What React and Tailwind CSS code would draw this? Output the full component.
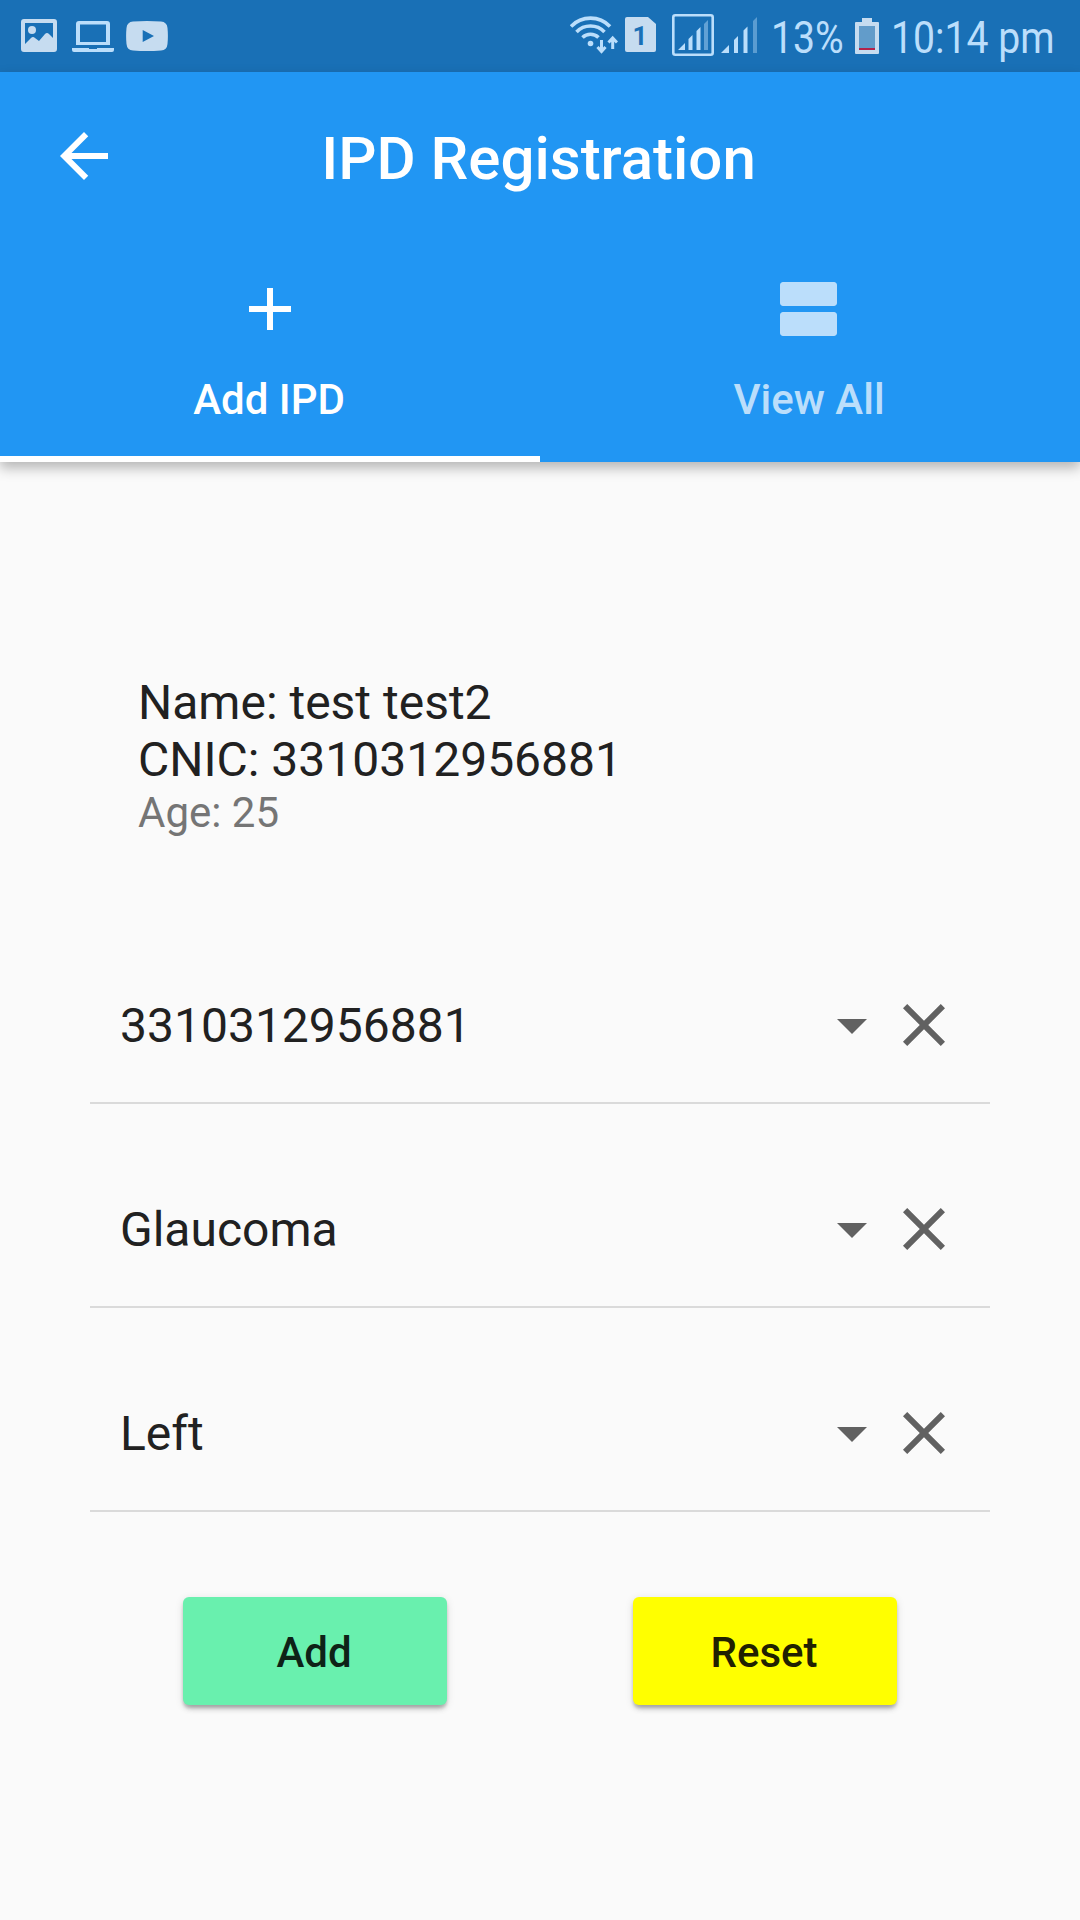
import { useState } from "react";
import clsx from "clsx";

const PATHS = {
  back: "M20 11H7.83l5.59-5.59L12 4l-8 8 8 8 1.41-1.41L7.83 13H20v-2z",
  add: "M19 13h-6v6h-2v-6H5v-2h6V5h2v6h6v2z",
  agenda:
    "M20 13H3c-.55 0-1 .45-1 1v6c0 .55.45 1 1 1h17c.55 0 1-.45 1-1v-6c0-.55-.45-1-1-1zm0-10H3c-.55 0-1 .45-1 1v6c0 .55.45 1 1 1h17c.55 0 1-.45 1-1V4c0-.55-.45-1-1-1z",
  dropDown: "M7 10l5 5 5-5z",
  close:
    "M19 6.41L17.59 5 12 10.59 6.41 5 5 6.41 10.59 12 5 17.59 6.41 19 12 13.41 17.59 19 19 17.59 13.41 12z",
};

const Icon = ({ name, className = "" }) => (
  <svg viewBox="0 0 24 24" className={clsx("size-18 shrink-0 fill-current", className)}>
    <path d={PATHS[name]} />
  </svg>
);

const StatusBar = () => (
  <div className="flex h-18 items-start bg-[#1970b6] pl-[21px] text-[#bbdefb]">
    {/* NOTIFICATIONS */}
    <svg viewBox="0 0 36 72" className="h-18 w-9 fill-[#c6dcf0]">
      <path
        fillRule="evenodd"
        d="M3 19h30a3 3 0 0 1 3 3v27a3 3 0 0 1-3 3H3a3 3 0 0 1-3-3V22a3 3 0 0 1 3-3zM4 23v21l6-6q2-2 4 0l4 3 6-7q2-2 4 0l4 4V23z"
      />
      <circle cx="11" cy="30" r="4" />
    </svg>
    <svg viewBox="0 0 42 72" className="ml-[15px] h-18 w-[42px] fill-current">
      <path
        fillRule="evenodd"
        d="M7 21h28a3 3 0 0 1 3 3v21H4V24a3 3 0 0 1 3-3zM8 24.500v17.500h26V24.500z"
      />
      <path d="M0 48h17v1h8v-1h17v2a2 2 0 0 1-2 2H2a2 2 0 0 1-2-2z" />
    </svg>
    <svg viewBox="0 0 42 72" className="ml-3 h-18 w-[42px] fill-[#c6dcf0]">
      <path
        fillRule="evenodd"
        d="M7 21.500Q21 20.500 35 21.500q6 .5 6.500 6.500.8 8 0 16-.5 6-6.500 6.500-14 1-28 0-6-.5-6.500-6.500-.8-8 0-16Q1 22 7 21.500zM16.700 30v12L28 36z"
      />
    </svg>

    {/* CONNECTIVITY */}
    <svg viewBox="0 0 48 72" className="ml-[402px] h-18 w-12 fill-none stroke-current">
      <path strokeWidth="3.600" d="M1 26.500a27 27 0 0 1 39 0M6.500 32a19.500 19.500 0 0 1 28 0M12.500 37.500a11.500 11.500 0 0 1 16 0" />
      <circle cx="20.500" cy="43.500" r="2.800" className="fill-current stroke-none" />
      <path strokeWidth="3" d="M31.500 40v11M27.500 47l4 4.500 4-4.500M42.700 49V38M38.500 42.500l4.200-4.500 4.300 4.500" />
    </svg>
    <div className="ml-[7px] mt-[17px] h-[35px] w-[31px]">
      <svg viewBox="0 0 31 35" className="fill-[#c6dcf0]">
        <path d="M2 0h21l8 7v26a2 2 0 0 1-2 2H2a2 2 0 0 1-2-2V2a2 2 0 0 1 2-2z" />
        <text x="15" y="28" textAnchor="middle" className="fill-[#1970b6] font-['Roboto'] text-[26px] font-bold">
          1
        </text>
      </svg>
    </div>
    <svg viewBox="0 0 42 72" className="ml-4 h-18 w-[42px] fill-current">
      <rect x="1.300" y="15.300" width="39.400" height="39.400" rx="2" className="fill-none stroke-current" strokeWidth="2.600" />
      <path d="M6 50l7-7v7zM16.500 39l4-4v15h-4zM24.500 31l4-4v23h-4z" />
      <path opacity=".45" d="M32 24l4-4v30h-4z" />
    </svg>
    <svg viewBox="0 0 36 72" className="ml-[7px] h-18 w-9 fill-current">
      <path d="M0 53l8-8v8zM13 40l4-4v17h-4zM22.500 30.500l4-4V53h-4z" />
      <path opacity=".4" d="M32 21l4-4v36h-4z" />
    </svg>

    <span className="ml-[14px] mt-0.5 w-[70px] origin-left scale-x-[0.87] whitespace-nowrap text-[45px] leading-[72px]">
      13%
    </span>
    <svg viewBox="0 0 24 72" className="ml-[14px] h-18 w-6">
      <path className="fill-[#c6dcf0]" d="M7 18h10v4h6a1 1 0 0 1 1 1v30a1 1 0 0 1-1 1H1a1 1 0 0 1-1-1V23a1 1 0 0 1 1-1h6z" />
      <path className="fill-[#629cca]" d="M4 26h16v22H4z" />
      <path className="fill-[#b3224a]" d="M4 48h16v2H4z" />
    </svg>
    <span className="ml-3 mt-0.5 origin-left scale-x-[0.87] whitespace-nowrap text-[45px] leading-[72px]">
      10:14 pm
    </span>
  </div>
);

const Tab = ({ icon, label, active, onClick }) => (
  <button
    onClick={onClick}
    className={clsx(
      "flex h-[222px] flex-1 flex-col items-center border-b-6 pt-[33px] text-[42px] font-medium",
      active ? "border-white text-white" : "border-transparent text-[#bbdefb]"
    )}
  >
    <Icon name={icon} />
    <span className="mt-[31px] pr-0.5 leading-[48px]">{label}</span>
  </button>
);

const SelectField = ({ value, onClear }) => (
  <div className="mb-[60px] flex h-36 items-center border-b-2 border-[#dadada] px-[30px] pb-3 text-[#616161]">
    <span className="flex-1 pt-0.5 text-5xl leading-[56px] text-[#212121]">{value}</span>
    <Icon name="dropDown" />
    <button onClick={onClear}>
      <Icon name="close" />
    </button>
  </div>
);

const ActionButton = ({ label, className = "", onClick }) => (
  <button
    onClick={onClick}
    className={clsx(
      "h-[108px] w-[264px] rounded-md pt-0.5 pr-0.5 text-[42px] font-medium",
      "shadow-[0_3px_3px_rgba(0,0,0,0.14),0_6px_6px_-3px_rgba(0,0,0,0.2),0_2px_8px_rgba(0,0,0,0.12)]",
      className
    )}
  >
    {label}
  </button>
);

const initialFields = ["3310312956881", "Glaucoma", "Left"];

const App = () => {
  const [tab, setTab] = useState("add");
  const [fields, setFields] = useState(initialFields);

  const clearField = (index) =>
    setFields(fields.map((field, i) => (i === index ? "" : field)));

  return (
    <div className="flex h-[1920px] w-[1080px] flex-col overflow-hidden bg-[#fafafa] font-['Roboto',sans-serif]">
      <StatusBar />

      <header className="bg-[#2196f3] shadow-[0_6px_12px_rgba(0,0,0,0.28)]">
        <div className="flex h-42 items-center px-12 text-white">
          <button>
            <Icon name="back" />
          </button>
          <h1 className="flex-1 pt-1.5 pr-[75px] text-center text-6xl leading-[70px] font-medium">
            IPD Registration
          </h1>
        </div>
        <div className="flex">
          <Tab icon="add" label="Add IPD" active={tab === "add"} onClick={() => setTab("add")} />
          <Tab icon="agenda" label="View All" active={tab === "all"} onClick={() => setTab("all")} />
        </div>
      </header>

      <main className="px-[90px] pt-[212px]">
        {/* PATIENT */}
        <div className="pl-12 text-5xl leading-[57px] text-[#212121]">
          <p>Name: test test2</p>
          <p>CNIC: 3310312956881</p>
          <p className="text-[42px] leading-[49px] text-[#757575]">Age: 25</p>
        </div>

        {/* FORM */}
        <div className="mt-[123px]">
          {fields.map((value, index) => (
            <SelectField key={index} value={value} onClear={() => clearField(index)} />
          ))}
        </div>

        <div className="mt-[85px] flex justify-between px-[93px]">
          <ActionButton label="Add" className="bg-[#69f0ae] text-[#0e2217]" />
          <ActionButton
            label="Reset"
            className="bg-[#ffff00] text-[#212100]"
            onClick={() => setFields(["", "", ""])}
          />
        </div>
      </main>
    </div>
  );
};

export default App;
